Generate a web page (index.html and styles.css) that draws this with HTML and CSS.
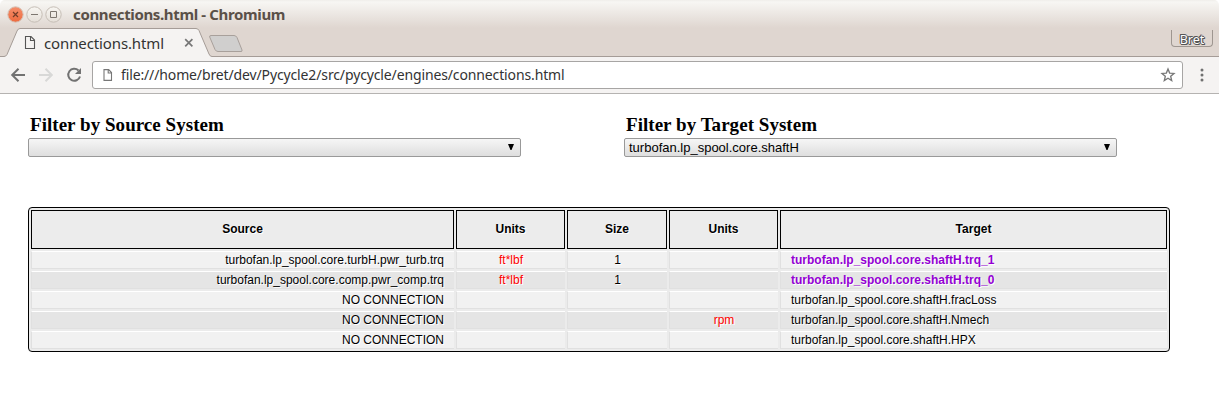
FILE: index.html
```html
<!DOCTYPE html>
<html lang="en">
<head>
<meta charset="utf-8">
<title>connections.html</title>
<link rel="stylesheet" href="styles.css">
</head>
<body>
<header class="chrome">
  <div class="titlebar">
    <svg class="controls" width="64" height="20" viewBox="0 0 64 20">
      <defs>
        <linearGradient id="close" x1="0" y1="0" x2="0" y2="1"><stop offset="0" stop-color="#f58e6b"/><stop offset="1" stop-color="#ed6a3e"/></linearGradient>
        <linearGradient id="btn" x1="0" y1="0" x2="0" y2="1"><stop offset="0" stop-color="#f8f6f2"/><stop offset="1" stop-color="#e5dfd8"/></linearGradient>
      </defs>
      <circle cx="15.500" cy="10.500" r="7.700" fill="url(#close)" stroke="#d5c4b9"/>
      <path d="M13 8l5 5M18 8l-5 5" stroke="#713c28" stroke-width="1.200"/>
      <circle cx="34.500" cy="10.500" r="7.700" fill="url(#btn)" stroke="#c6beb6"/>
      <path d="M31 10.500h7" stroke="#7d7770"/>
      <circle cx="53.500" cy="10.500" r="7.700" fill="url(#btn)" stroke="#c6beb6"/>
      <path d="M50.500 7.500h6v6h-6z" fill="none" stroke="#7d7770"/>
    </svg>
    <span class="window-title">connections.html - Chromium</span>
  </div>
  <div class="tabstrip">
    <div class="tab">
      <svg class="tab-shape" width="214" height="29" viewBox="0 0 214 29">
        <path d="M0 28.500H4Q6 28.500 7 26.500L17 3Q18 .5 20 .5H196Q198 .5 199 2.500L209 26Q210 28.500 212 28.500H214V29H0z" fill="#f5f3f2"/>
        <path d="M0 28.500H4Q6 28.500 7 26.500L17 3Q18 .5 20 .5H196Q198 .5 199 2.500L209 26Q210 28.500 212 28.500H214" fill="none" stroke="#a59c97"/>
      </svg>
      <svg class="tab-page" width="12" height="15" viewBox="0 0 12 15"><path d="M1.500 1.500h5.500l3.500 3.500v8.500h-9zM6.500 1.500v4h4" fill="none" stroke="#555" stroke-width="1.100"/></svg>
      <span class="tab-title">connections.html</span>
      <svg class="tab-close" width="10" height="10" viewBox="0 0 10 10"><path d="M1.200 1.200l7.200 7.200M8.400 1.200l-7.200 7.200" stroke="#777" stroke-width="1.700"/></svg>
    </div>
    <svg class="new-tab" width="36" height="19" viewBox="0 0 36 19"><path d="M3 1.500H26Q28 1.500 29 3.500L34 16Q34.500 17.500 33 17.500H10Q8 17.500 7 15.500L1.700 3Q1.300 1.500 3 1.500z" fill="#d0cfce" stroke="#a8a09b"/></svg>
    <span class="profile">Bret</span>
  </div>
  <div class="toolbar">
    <svg class="nav" width="84" height="20" viewBox="0 0 84 20" fill="none" stroke-width="2">
      <path d="M25 10H12.500M18.500 3.700L12.200 10l6.300 6.300" stroke="#727272"/>
      <path d="M39 10h12.500M45.500 3.700l6.300 6.300-6.300 6.300" stroke="#d8d8d7"/>
      <path d="M78.500 5.500A6 6 0 1 0 80 11.500" stroke="#727272"/><path d="M81 3v6h-6z" fill="#727272"/>
    </svg>
    <div class="omnibox">
      <svg class="page-icon" width="10" height="12" viewBox="0 0 10 12"><path d="M1 .6h4.700l2.800 2.900v7.900H1zM5.200 .6v3.400h3.300" fill="none" stroke="#777" stroke-width="1.100"/></svg>
      <span class="url">file:///home/bret/dev/Pycycle2/src/pycycle/engines/connections.html</span>
      <svg class="star" width="16" height="16" viewBox="0 0 16 16"><path d="M8 2l1.650 4.100 4.350.350-3.300 2.850 1 4.300L8 11.300l-3.700 2.300 1-4.300L2 6.450l4.350-.35z" fill="none" stroke="#777" stroke-width="1.350"/></svg>
    </div>
    <svg class="menu" width="4" height="14" viewBox="0 0 4 14" fill="#707070"><circle cx="2" cy="2" r="1.500"/><circle cx="2" cy="7" r="1.500"/><circle cx="2" cy="12" r="1.500"/></svg>
  </div>
</header>
<main>
  <section class="filters">
    <div class="filter">
      <h3>Filter by Source System</h3>
      <div class="select"><span></span><svg width="6" height="6" viewBox="0 0 6 6"><path d="M0 0h6L3.500 6h-1z"/></svg></div>
    </div>
    <div class="filter">
      <h3>Filter by Target System</h3>
      <div class="select"><span>turbofan.lp_spool.core.shaftH</span><svg width="6" height="6" viewBox="0 0 6 6"><path d="M0 0h6L3.500 6h-1z"/></svg></div>
    </div>
  </section>
  <div class="table">
    <div class="th">Source</div><div class="th">Units</div><div class="th">Size</div><div class="th">Units</div><div class="th">Target</div>
    <div class="td source">turbofan.lp_spool.core.turbH.pwr_turb.trq</div><div class="td units">ft*lbf</div><div class="td">1</div><div class="td"></div><div class="td target linked">turbofan.lp_spool.core.shaftH.trq_1</div>
    <div class="td even source">turbofan.lp_spool.core.comp.pwr_comp.trq</div><div class="td even units">ft*lbf</div><div class="td even">1</div><div class="td even"></div><div class="td even target linked">turbofan.lp_spool.core.shaftH.trq_0</div>
    <div class="td source">NO CONNECTION</div><div class="td"></div><div class="td"></div><div class="td"></div><div class="td target">turbofan.lp_spool.core.shaftH.fracLoss</div>
    <div class="td even source">NO CONNECTION</div><div class="td even"></div><div class="td even"></div><div class="td even units">rpm</div><div class="td even target">turbofan.lp_spool.core.shaftH.Nmech</div>
    <div class="td source">NO CONNECTION</div><div class="td"></div><div class="td"></div><div class="td"></div><div class="td target">turbofan.lp_spool.core.shaftH.HPX</div>
  </div>
</main>
</body>
</html>
```
FILE: styles.css
```css
* { box-sizing: border-box; }
body { margin: 0; background: #fff; height: 402px; overflow: hidden; }
svg { display: block; flex: none; }

.chrome {
  height: 94px;
  background: linear-gradient(#f0eeea 0, #f7f6f3 2px, #dfd6d0 28px);
  border-radius: 5px 5px 0 0;
  font-family: "Noto Sans", sans-serif;
  color: #333;
}
.titlebar { display: flex; height: 28px; align-items: flex-start; padding-top: 4px; }
.window-title { margin-left: 9px; font-weight: 700; font-size: 15px; line-height: 21px; color: #5a5048; letter-spacing: -0.36px; white-space: nowrap; }
.tabstrip { display: flex; height: 29px; border-bottom: 1px solid #a59c97; }
.tab { display: flex; position: relative; width: 208px; height: 29px; padding-left: 24px; align-items: center; }
.tab-shape { position: absolute; left: 0; top: 0; }
.tab-page, .tab-title, .tab-close { position: relative; }
.tab-title { width: 120px; margin-left: 8px; font-size: 15px; line-height: 28px; letter-spacing: -0.12px; white-space: nowrap; }
.tab-close { margin-left: 20px; }
.new-tab { margin-top: 6px; }
.profile {
  margin: 2px 6px 0 auto; width: 42px; height: 17px;
  border: 1px solid #9e9690; border-top: 0; border-radius: 0 0 4px 4px;
  color: #fff; font-size: 12.5px; line-height: 19px; text-align: center;
  text-shadow: 1px 0 #555, -1px 0 #555, 0 1px #555, 0 -1px #555, 1px 1px #555, -1px -1px #555;
}
.toolbar { display: flex; height: 37px; padding-top: 4px; background: #f5f3f2; border-bottom: 1px solid #b5b3b1; }
.nav { margin-top: 4px; }
.omnibox { display: flex; align-items: center; width: 1091px; height: 28px; margin-left: 8px; padding: 0 6px 0 10px; background: #fff; border: 1px solid #a7a5a4; border-radius: 3px; }
.url { margin-left: 8px; font-size: 14px; line-height: 26px; letter-spacing: -0.13px; white-space: nowrap; }
.star { margin-left: auto; }
.menu { margin: 7px 0 0 17px; }

main { padding: 20px 0 0 28px; }
.filters { display: flex; gap: 103px; }
.filter { width: 493px; }
h3 { margin: 0 0 2px 2px; font: 700 19px/22px "Liberation Serif", serif; letter-spacing: 0.04px; }
.select {
  display: flex; justify-content: space-between; height: 19px; padding: 0 6px 0 4px;
  border: 1px solid #999; border-radius: 2px; background: linear-gradient(#f6f6f6, #dedede);
  font: 13px/18px "Liberation Sans", sans-serif;
}
.select svg { margin-top: 5px; }

.table {
  display: grid; width: 1142px; margin-top: 50px; padding: 2px;
  grid-template-columns: 423px 109px 100px 109px 387px;
  grid-template-rows: 39px; grid-auto-rows: 18px; gap: 2px;
  border: 1px solid #000; border-radius: 4px; background: #ebebeb;
  font: 12px/17px "Liberation Sans", sans-serif; color: #000; text-shadow: 1px 1px 0 #fff;
}
.th { border: 1px solid #000; background: #ececec; font-weight: 700; line-height: 37px; text-align: center; }
.td { border: 1px solid #e0e0e0; border-top-color: #fff; border-right: 0; background: #f1f1f1; text-align: center; white-space: nowrap; }
.td.even { background: #e5e5e5; }
.td.source { padding-right: 10px; text-align: right; }
.td.target { padding-left: 10px; text-align: left; }
.td.units { color: #f00; }
.td.linked { color: #9400d3; font-weight: 700; }
```
